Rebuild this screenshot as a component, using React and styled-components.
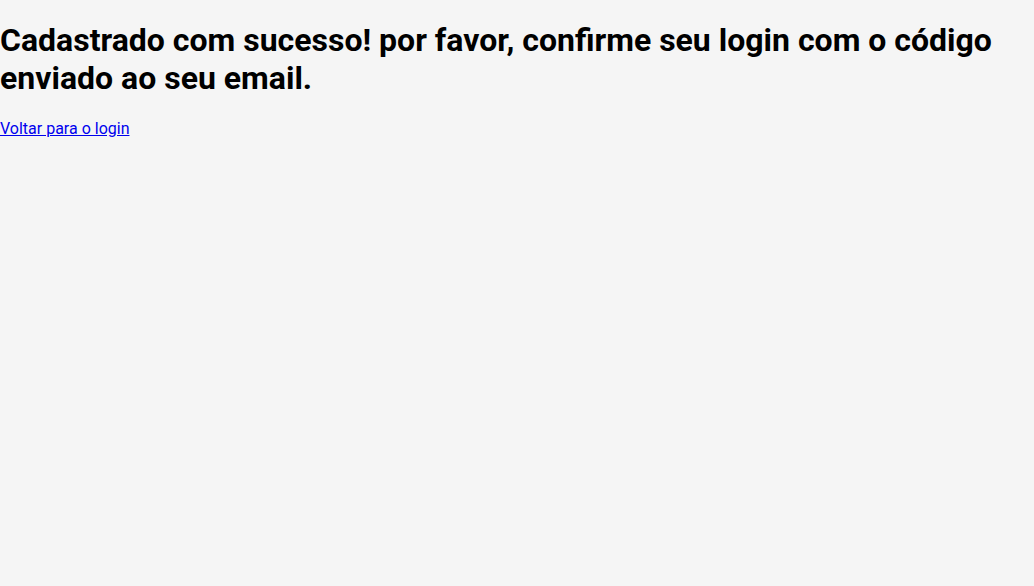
import React from 'react';
import styled, { createGlobalStyle } from 'styled-components';

const GlobalStyle = createGlobalStyle`
  html, body {
    margin: 0;
    background: #f5f5f5;
    font-family: Roboto, "Liberation Sans", sans-serif;
  }
`;

const Page = styled.main`
  min-height: 100vh;
  background: #f5f5f5;
`;

const Title = styled.h1`
  font-size: 32px;
  font-weight: 700;
  margin: 21.44px 0;
  color: #000;
`;

const BackLink = styled.a`
  font-size: 16px;
  color: #0000ee;
  text-decoration: underline;
`;

function App () {
  return (
    <>
      <GlobalStyle />
      <Page>
        <Title>Cadastrado com sucesso! por favor, confirme seu login com o código enviado ao seu email.</Title>
        <BackLink href="#login">Voltar para o login</BackLink>
      </Page>
    </>
  );
}

export default App;
